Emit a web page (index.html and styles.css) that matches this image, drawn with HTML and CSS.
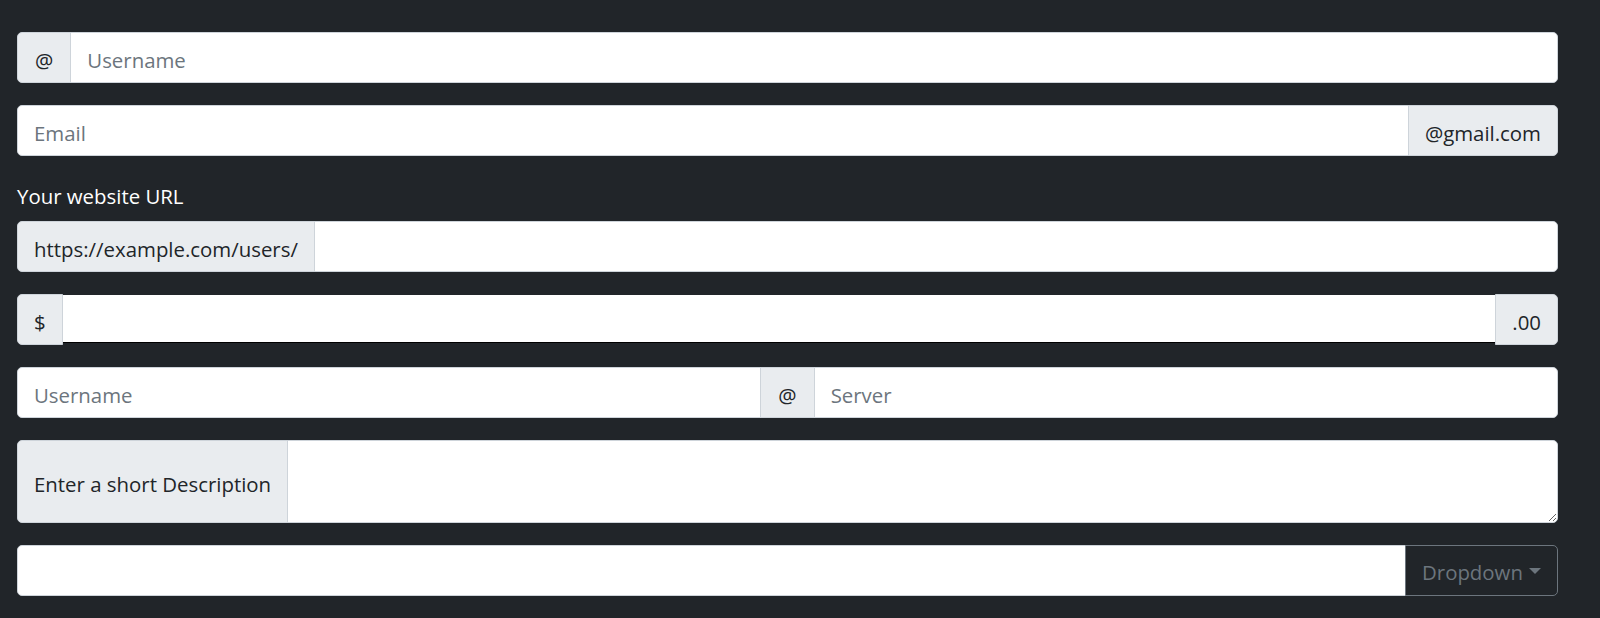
FILE: index.html
```html
<!DOCTYPE html>
<html lang="en">
<head>
<meta charset="utf-8">
<title>Input groups</title>
<link rel="stylesheet" href="styles.css">
</head>
<body>
<div class="page">
  <div class="group">
    <span class="addon first wide">@</span>
    <input class="field last" type="text" placeholder="Username">
  </div>
  <div class="group">
    <input class="field first" type="text" placeholder="Email">
    <span class="addon last">@gmail.com</span>
  </div>
  <label class="label" for="url">Your website URL</label>
  <div class="group">
    <span class="addon first">https://example.com/users/</span>
    <input class="field last" id="url" type="text">
  </div>
  <div class="group">
    <span class="addon first">$</span>
    <input class="plain" type="text">
    <span class="addon last">.00</span>
  </div>
  <div class="group">
    <input class="field first" type="text" placeholder="Username">
    <span class="addon mid wide">@</span>
    <input class="field last" type="text" placeholder="Server">
  </div>
  <div class="group tall">
    <span class="addon first">Enter a short Description</span>
    <textarea class="field last area"></textarea>
  </div>
  <div class="group">
    <input class="field first" type="text">
    <button class="dropdown last" type="button">Dropdown</button>
  </div>
</div>
</body>
</html>
```
FILE: styles.css
```css
* { box-sizing: border-box; }
html, body {
  margin: 0;
  background: #212529;
  font-family: "Open Sans", "Noto Sans", sans-serif;
  font-size: 20.4px;
}
.page {
  width: 1541px;
  padding: 32px 0 0 17px;
  box-sizing: content-box;
}
.group {
  display: flex;
  align-items: stretch;
  height: 51px;
  margin-bottom: 22px;
}
.group.tall { height: 83px; }
.addon {
  display: flex;
  align-items: center;
  padding: 4px 16px 0 16px;
  background: #e9ecef;
  border: 1px solid #ced4da;
  color: #212529;
  white-space: nowrap;
  font-size: 20.4px;
}
.addon.wide { padding: 4px 17px 0 17px; }
.addon + .field, .field + .addon, .addon + .dropdown, .field + .dropdown { margin-left: -1px; }
.field {
  flex: 1;
  min-width: 0;
  border: 1px solid #ced4da;
  background: #fff;
  padding: 4px 16px 0 16px;
  font-family: inherit;
  font-size: 20.4px;
  color: #495057;
  outline: none;
}
.field::placeholder { color: #6c757d; }
.area {
  padding: 8px 16px;
  resize: vertical;
  height: 83px;
}
.plain {
  flex: 1;
  min-width: 0;
  margin: 1px 0 2px 0;
  border: 0;
  border-bottom: 1.5px solid #000;
  background: #fff;
  font-family: inherit;
  font-size: 20.4px;
  outline: none;
}
.first { border-radius: 5px 0 0 5px; }
.last { border-radius: 0 5px 5px 0; }
.mid { border-radius: 0; }
.label {
  display: block;
  color: #fff;
  font-size: 20.4px;
  line-height: 32px;
  padding-top: 2px;
  margin-bottom: 9px;
}
.dropdown {
  display: flex;
  align-items: center;
  width: 153px;
  padding: 3px 16px 0 16px;
  background: transparent;
  border: 1px solid #6c757d;
  color: #6c757d;
  font-family: inherit;
  font-size: 20.4px;
}
.dropdown::after {
  content: "";
  margin-left: 6px;
  margin-top: -2px;
  border-top: 6.5px solid #6c757d;
  border-left: 6.5px solid transparent;
  border-right: 6.5px solid transparent;
}
```
